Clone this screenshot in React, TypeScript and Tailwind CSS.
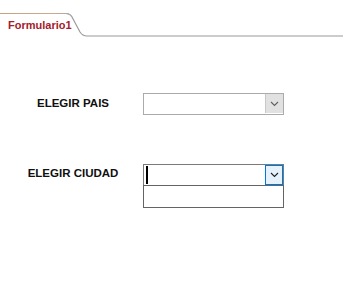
function Chevron({ color = '#404040' }: { color?: string }) {
  return (
    <svg width="9" height="6" viewBox="0 0 9 6" fill="none">
      <polyline points="1,1 4.5,4.5 8,1" stroke={color} strokeWidth="1.1" />
    </svg>
  )
}

function ComboBox({ active = false }: { active?: boolean }) {
  return (
    <div className="flex flex-col w-[141px]">
      <div
        className={
          active
            ? 'flex h-[22px] border border-[#7a7a7a] bg-white'
            : 'flex h-[22px] border border-[#ababab] bg-white'
        }
      >
        <div className="flex-1 flex items-center pl-[2px]">
          {active && <div className="w-[2px] h-[18px] bg-black" />}
        </div>
        {active ? (
          <div className="w-[18px] flex items-center justify-center border border-[#0078d7] bg-[#e5f1fb]">
            <Chevron color="#202020" />
          </div>
        ) : (
          <div className="w-[18px] mb-[1px] flex items-center justify-center border-l border-[#c8c8c8] bg-[#e1e1e1]">
            <Chevron color="#606060" />
          </div>
        )}
      </div>
      {active && <div className="-mt-px h-[23px] border border-[#646464] bg-white" />}
    </div>
  )
}

export default function App() {
  return (
    <div
      className="w-[343px] h-[291px] bg-white overflow-hidden"
      style={{ fontFamily: '"Liberation Sans", Arial, sans-serif' }}
    >
      {/* Tab header */}
      <div className="relative h-[37px]">
        <svg className="absolute inset-0" width="343" height="37" viewBox="0 0 343 37">
          <defs>
            <linearGradient id="tabline" x1="0" y1="0" x2="1" y2="0">
              <stop offset="0" stopColor="#c9a47e" />
              <stop offset="0.75" stopColor="#c9ab90" />
              <stop offset="1" stopColor="#a8a8a8" />
            </linearGradient>
          </defs>
          <path
            d="M0 13.5 H66 Q70 13.5 72 17 L80 32 Q82.5 36 87 36 H343"
            stroke="#9a9a9a"
            strokeWidth="1.2"
            fill="none"
          />
          <path d="M0 13.5 H66 Q70 13.5 72 17" stroke="url(#tabline)" strokeWidth="1.2" fill="none" />
        </svg>
        <span className="absolute left-[8px] top-[19px] text-[11px] leading-[12px] font-bold text-[#a3202c]">
          Formulario1
        </span>
      </div>

      {/* Form body */}
      <div className="flex flex-col pt-[56px] gap-[49px]">
        <div className="flex items-start">
          <div className="w-[143px] pl-[3px] h-[22px] flex items-center justify-center text-[11.5px] font-bold text-[#101010]">
            ELEGIR PAIS
          </div>
          <ComboBox />
        </div>
        <div className="flex items-start">
          <div className="w-[143px] pl-[3px] h-[20px] flex items-center justify-center text-[11.5px] font-bold text-[#101010]">
            ELEGIR CIUDAD
          </div>
          <ComboBox active />
        </div>
      </div>
    </div>
  )
}
